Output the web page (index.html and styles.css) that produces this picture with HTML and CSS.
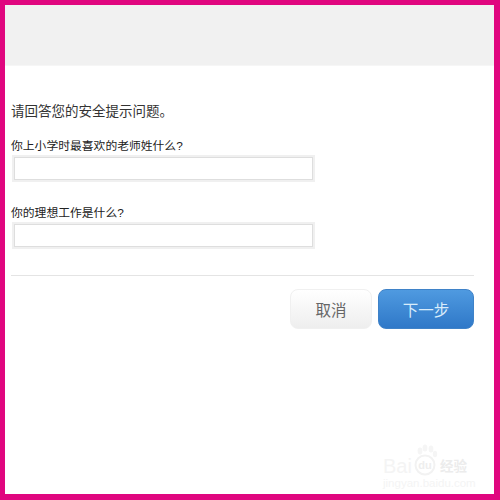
FILE: index.html
```html
<!DOCTYPE html>
<html lang="zh-CN">
<head>
    <meta charset="UTF-8">
    <title>安全提示问题</title>
    <link rel="stylesheet" href="styles.css">
</head>
<body>
    <div class="frame">
        <div class="top-band"></div>

        <div class="content">
            <p class="intro">请回答您的安全提示问题。</p>

            <div class="field">
                <label class="field-label">你上小学时最喜欢的老师姓什么?</label>
                <input class="field-input" type="text">
            </div>

            <div class="field">
                <label class="field-label">你的理想工作是什么?</label>
                <input class="field-input" type="text">
            </div>

            <div class="actions">
                <button class="btn btn-cancel">取消</button>
                <button class="btn btn-next">下一步</button>
            </div>
        </div>

        <!-- Watermark -->
        <div class="watermark">
            <div class="wm-row">
                <span class="wm-bai">Bai</span>
                <svg class="wm-paw" viewBox="0 0 28 32" width="28" height="32">
                    <ellipse cx="8" cy="7" rx="2.4" ry="3.4"/>
                    <ellipse cx="13" cy="4" rx="2.4" ry="3.6"/>
                    <ellipse cx="19" cy="5" rx="2.4" ry="3.6"/>
                    <ellipse cx="23" cy="10" rx="2.2" ry="3.2"/>
                    <circle class="wm-ring" cx="13" cy="21" r="9.5"/>
                    <text class="wm-du" x="13" y="25">du</text>
                </svg>
                <span class="wm-cn">经验</span>
            </div>
            <div class="wm-url">jingyan.baidu.com</div>
        </div>
    </div>
</body>
</html>
```

FILE: styles.css
```css
* {
    margin: 0;
    padding: 0;
    box-sizing: border-box;
}

body {
    width: 500px;
    height: 500px;
    overflow: hidden;
    background-color: #ffffff;
    font-family: "Liberation Sans", "Noto Sans CJK SC", sans-serif;
}

.frame {
    position: relative;
    width: 500px;
    height: 500px;
    border-style: solid;
    border-color: #e0067f;
    border-width: 5px 6px 6px 5px;
    background-color: #ffffff;
}

.top-band {
    height: 61px;
    background-color: #f1f1f1;
    border-bottom: 1px solid #f6f6f6;
}

.content {
    padding: 37px 20px 0 6px;
}

.intro {
    font-size: 13.5px;
    line-height: 18px;
    color: #333333;
    margin-bottom: 17px;
}

.field {
    display: flex;
    flex-direction: column;
    align-items: flex-start;
    margin-bottom: 25px;
}

.field-label {
    font-size: 11.8px;
    line-height: 16px;
    color: #222222;
    margin-bottom: 3px;
}

.field-input {
    width: 299px;
    height: 23px;
    margin-left: 3px;
    background-color: #ffffff;
    border: 1px solid #dedede;
    outline: none;
    box-shadow: 0 0 0 2px #f0f0f0;
}

.actions {
    display: flex;
    justify-content: flex-end;
    gap: 6px;
    border-top: 1px solid #e4e4e4;
    margin-top: 28px;
    padding-top: 13px;
}

.btn {
    height: 40px;
    border-radius: 8px;
    font-family: inherit;
    font-size: 15.5px;
}

.btn-cancel {
    width: 82px;
    color: #666666;
    border: 1px solid #f0f0f0;
    background: linear-gradient(#ffffff, #eeeeee);
}

.btn-next {
    width: 96px;
    color: #d8ecfb;
    border: 1px solid #3f82c8;
    background: linear-gradient(#4f9ae0, #2f78c8);
}

.watermark {
    position: absolute;
    left: 378px;
    top: 439px;
    width: 95px;
    color: #f4f4f4;
}

.wm-row {
    display: flex;
    align-items: flex-end;
    height: 32px;
}

.wm-bai {
    font-size: 20px;
    line-height: 20px;
}

.wm-paw {
    fill: #f5f5f5;
    flex-shrink: 0;
    overflow: visible;
}

.wm-ring {
    fill: #ffffff;
    stroke: #f2f2f2;
    stroke-width: 2;
}

.wm-du {
    font-size: 11px;
    font-weight: bold;
    text-anchor: middle;
    fill: #eeeeee;
}

.wm-cn {
    font-size: 13.5px;
    line-height: 18px;
    font-weight: bold;
    color: #ececec;
}

.wm-url {
    font-size: 11.5px;
    line-height: 12px;
    margin-top: 1px;
    white-space: nowrap;
}
```
